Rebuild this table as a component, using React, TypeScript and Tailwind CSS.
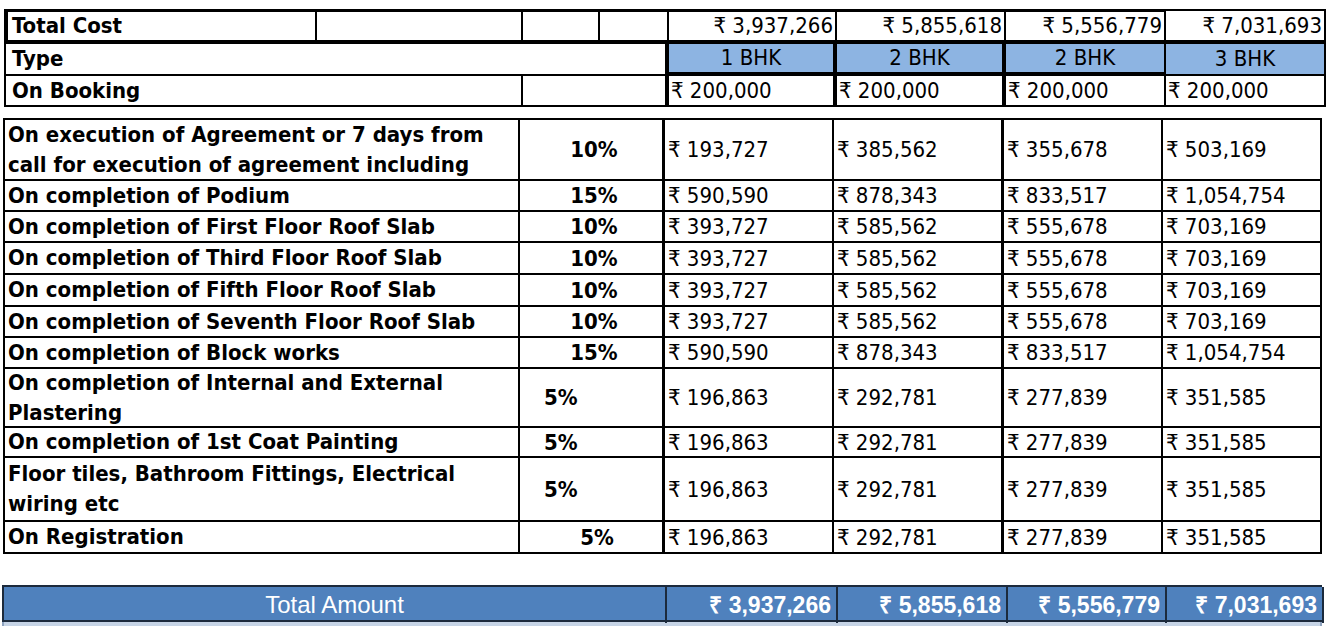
const font = "font-['DejaVu_Sans_Condensed','DejaVu_Sans',sans-serif]";

type Row = {
  label: string[];
  pct: string;
  h: string;
  pctPos: string;
  vals: string[];
};

const A = ["₹ 393,727", "₹ 585,562", "₹ 555,678", "₹ 703,169"];
const B = ["₹ 590,590", "₹ 878,343", "₹ 833,517", "₹ 1,054,754"];
const C = ["₹ 196,863", "₹ 292,781", "₹ 277,839", "₹ 351,585"];

const rows: Row[] = [
  {
    label: ["On execution of Agreement or 7 days from", "call for execution of agreement including"],
    pct: "10%",
    h: "h-[61px]",
    pctPos: "justify-center pl-[6px]",
    vals: ["₹ 193,727", "₹ 385,562", "₹ 355,678", "₹ 503,169"],
  },
  { label: ["On completion of Podium"], pct: "15%", h: "h-[31px]", pctPos: "justify-center pl-[6px]", vals: B },
  { label: ["On completion of First Floor Roof Slab"], pct: "10%", h: "h-[31px]", pctPos: "justify-center pl-[6px]", vals: A },
  { label: ["On completion of Third Floor Roof Slab"], pct: "10%", h: "h-[32px]", pctPos: "justify-center pl-[6px]", vals: A },
  { label: ["On completion of Fifth Floor Roof Slab"], pct: "10%", h: "h-[32px]", pctPos: "justify-center pl-[6px]", vals: A },
  { label: ["On completion of Seventh Floor Roof Slab"], pct: "10%", h: "h-[31px]", pctPos: "justify-center pl-[6px]", vals: A },
  { label: ["On completion of Block works"], pct: "15%", h: "h-[31px]", pctPos: "justify-center pl-[6px]", vals: B },
  {
    label: ["On completion of Internal and External", "Plastering"],
    pct: "5%",
    h: "h-[59px]",
    pctPos: "justify-start pl-[24px]",
    vals: C,
  },
  { label: ["On completion of 1st Coat Painting"], pct: "5%", h: "h-[30px]", pctPos: "justify-start pl-[24px]", vals: C },
  {
    label: ["Floor tiles, Bathroom Fittings, Electrical", "wiring etc"],
    pct: "5%",
    h: "h-[64px]",
    pctPos: "justify-start pl-[24px]",
    vals: C,
  },
  { label: ["On Registration"], pct: "5%", h: "h-[32px]", pctPos: "justify-center pl-[12px]", vals: C },
];

const valBorder = ["border-r-2", "border-r-[3px]", "border-r-2", "border-r-2"];

function TopTable() {
  return (
    <div className={`ml-[4px] mt-[9px] w-[1323px] grid grid-cols-[313px_206px_77px_69px_168px_169px_160px_160px] text-[22px] leading-none text-black ${font}`}>
      {/* Total Cost row */}
      <div className="h-[35px] border-l-4 border-t-[3px] border-b-4 border-r-2 border-black flex items-center pl-[4px] font-bold">Total Cost</div>
      <div className="h-[35px] border-t-[3px] border-b-4 border-r-2 border-black" />
      <div className="h-[35px] border-t-[3px] border-b-4 border-r-2 border-black" />
      <div className="h-[35px] border-t-[3px] border-b-4 border-r-2 border-black" />
      {["₹ 3,937,266", "₹ 5,855,618", "₹ 5,556,779"].map((v) => (
        <div key={v} className="h-[35px] border-t-[3px] border-b-4 border-r-2 border-black flex items-center justify-end pr-[2px]">
          {v}
        </div>
      ))}
      <div className="h-[35px] border-t-2 border-b-4 border-r-2 border-black flex items-center justify-end pr-[2px]">₹ 7,031,693</div>

      {/* Type row */}
      <div className="col-span-4 h-[32px] border-l-2 border-b-2 border-r-4 border-black flex items-center pl-[6px] font-bold">Type</div>
      <div className="h-[32px] border-b-4 border-r-4 border-black bg-[#8db4e2] flex items-center justify-center">1 BHK</div>
      <div className="h-[32px] border-b-4 border-r-4 border-black bg-[#8db4e2] flex items-center justify-center">2 BHK</div>
      <div className="h-[32px] border-b-4 border-r-2 border-black bg-[#8db4e2] flex items-center justify-center">2 BHK</div>
      <div className="h-[32px] border-b-2 border-r-2 border-black bg-[#8db4e2] flex items-center justify-center">3 BHK</div>

      {/* On Booking row */}
      <div className="col-span-2 h-[31px] border-l-2 border-b-2 border-r-2 border-black flex items-center pl-[6px] font-bold">On Booking</div>
      <div className="col-span-2 h-[31px] border-b-2 border-r-4 border-black" />
      <div className="h-[31px] border-b-2 border-r-4 border-black flex items-center pl-[2px]">₹ 200,000</div>
      <div className="h-[31px] border-b-2 border-r-4 border-black flex items-center pl-[2px]">₹ 200,000</div>
      <div className="h-[31px] border-b-2 border-r-2 border-black flex items-center pl-[2px]">₹ 200,000</div>
      <div className="h-[31px] border-b-2 border-r-2 border-black flex items-center pl-[2px]">₹ 200,000</div>
    </div>
  );
}

function ScheduleTable() {
  return (
    <div className={`ml-[3px] mt-[11px] w-[1319px] grid grid-cols-[517px_145px_169px_170px_159px_159px] border-t-2 border-black text-[22px] text-black ${font}`}>
      {rows.map((r, i) => (
        <div key={i} className="contents">
          <div className={`${r.h} border-l-2 border-r-2 border-b-2 border-black flex flex-col justify-center pl-[3px] font-bold leading-[30px]`}>
            {r.label.map((l) => (
              <span key={l} className="whitespace-nowrap">{l}</span>
            ))}
          </div>
          <div className={`${r.h} border-r-[3px] border-b-2 border-black flex items-center ${r.pctPos} font-bold`}>{r.pct}</div>
          {r.vals.map((v, j) => (
            <div key={j} className={`${r.h} ${valBorder[j]} border-b-2 border-black flex items-center pl-[3px]`}>
              {v}
            </div>
          ))}
        </div>
      ))}
    </div>
  );
}

function TotalBar() {
  const totals = ["₹ 3,937,266", "₹ 5,855,618", "₹ 5,556,779", "₹ 7,031,693"];
  return (
    <div className="ml-[2px] mt-[31px] w-[1320px] font-['Liberation_Sans',Arial,sans-serif] text-white">
      <div className="grid grid-cols-[663px_171px_170px_159px_157px] bg-[#4f81bd] border-t-2 border-b-2 border-l-2 border-[#1c2a3c] h-[37px]">
        <div className="flex items-center justify-center border-r-2 border-[#1c2a3c] text-[24px]">Total Amount</div>
        {totals.map((t) => (
          <div key={t} className="flex items-center justify-end pr-[5px] font-bold text-[23px] border-r-2 border-[#1c2a3c]">
            {t}
          </div>
        ))}
      </div>
      <div className="h-[6px] bg-[#c6d4e6] border-l-2 border-r-2 border-[#8ea3bf]" />
    </div>
  );
}

export default function App() {
  return (
    <div className="w-[1336px] h-[626px] bg-white overflow-hidden">
      <TopTable />
      <ScheduleTable />
      <TotalBar />
    </div>
  );
}
